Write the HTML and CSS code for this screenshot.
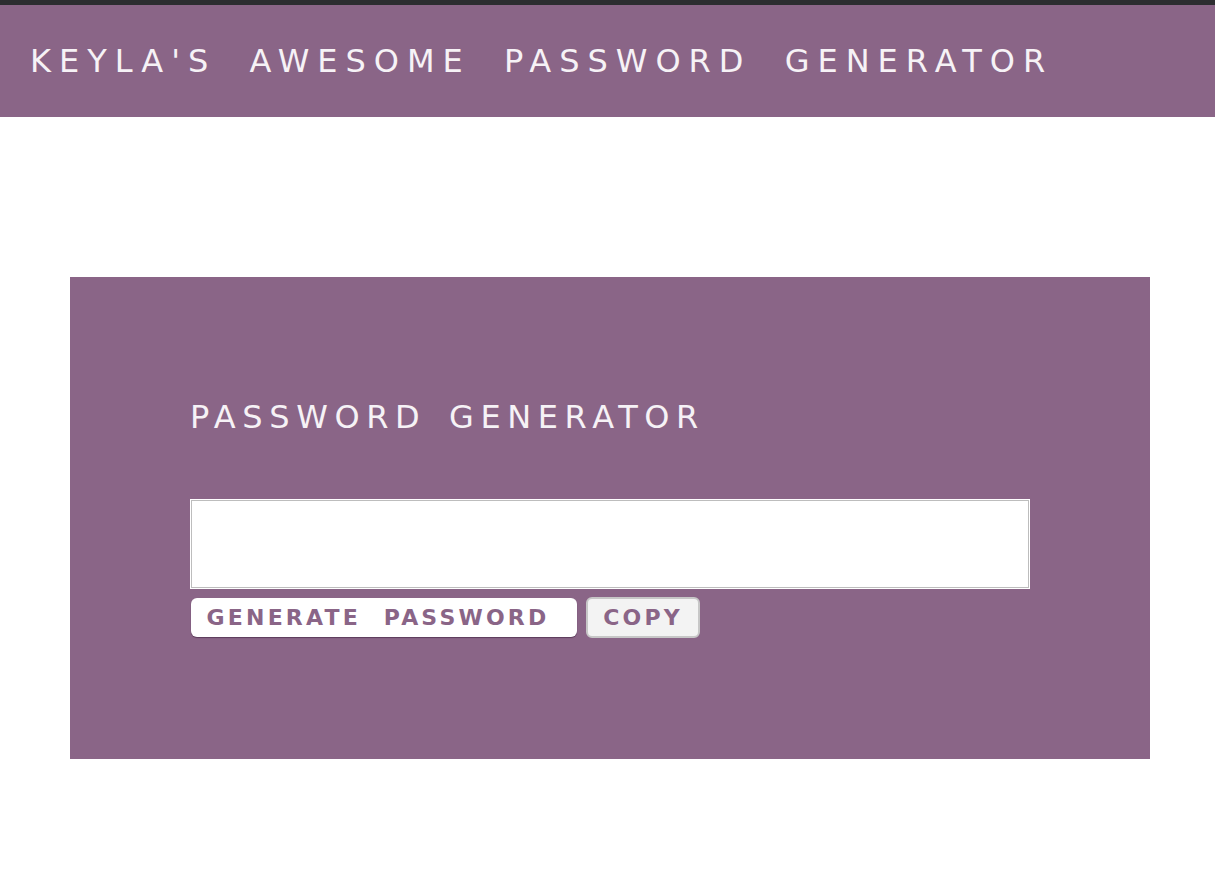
FILE: index.html
```html
<!DOCTYPE html>
<html lang="en">
<head>
<meta charset="utf-8">
<title>Password Generator</title>
<link rel="stylesheet" href="styles.css">
</head>
<body>
<header class="site-header">
  <h1 class="site-title">KEYLA'S AWESOME PASSWORD GENERATOR</h1>
</header>
<main class="page">
  <section class="card">
    <h2 class="card-title">PASSWORD GENERATOR</h2>
    <textarea class="output" readonly></textarea>
    <div class="actions">
      <button class="btn btn-generate" type="button">GENERATE PASSWORD</button>
      <button class="btn btn-copy" type="button">COPY</button>
    </div>
  </section>
</main>
</body>
</html>
```

FILE: styles.css
```css
* { box-sizing: border-box; }
html, body { margin: 0; padding: 0; background: #ffffff; }
body {
  font-family: "DejaVu Sans", Verdana, sans-serif;
  border-top: 5px solid #2c2d30;
}
.site-header {
  background: #8a6587;
  height: 112px;
  padding: 40px 30px;
}
.site-title {
  margin: 0;
  font-size: 32px;
  line-height: 32px;
  font-weight: normal;
  letter-spacing: 8px;
  word-spacing: 15px;
  color: #f6f2f6;
  white-space: nowrap;
}
.page {
  padding-top: 160px;
  padding-left: 70px;
}
.card {
  width: 1080px;
  background: #8a6587;
  padding: 124px 120px 121px;
  display: flex;
  flex-direction: column;
}
.card-title {
  margin: 0;
  font-size: 32px;
  line-height: 32px;
  font-weight: normal;
  letter-spacing: 6.6px;
  word-spacing: 6px;
  color: #f6f2f6;
  white-space: nowrap;
}
.output {
  margin-top: 66px;
  width: 840px;
  height: 90px;
  border: 1px solid #ffffff;
  box-shadow: inset 0 0 0 1px #bdbdbd;
  background: #fff;
  resize: none;
  outline: none;
}
.actions {
  margin-top: 8px;
  display: flex;
  align-items: center;
  gap: 9px;
}
.btn {
  font-family: "DejaVu Sans", Verdana, sans-serif;
  font-weight: bold;
  font-size: 22px;
  letter-spacing: 3.2px;
  color: #8a6587;
  border-radius: 6px;
  padding: 0;
  display: flex;
  align-items: center;
  justify-content: center;
}
.btn-generate {
  margin-left: 1px;
  width: 386px;
  height: 39px;
  padding-right: 12px;
  word-spacing: 12px;
  background: #ffffff;
  border: none;
  box-shadow: 0 1px 1px rgba(60, 30, 60, 0.6);
}
.btn-copy {
  width: 114px;
  height: 41px;
  background: #f3f3f3;
  border: 2px solid #c7c7c7;
}
```
